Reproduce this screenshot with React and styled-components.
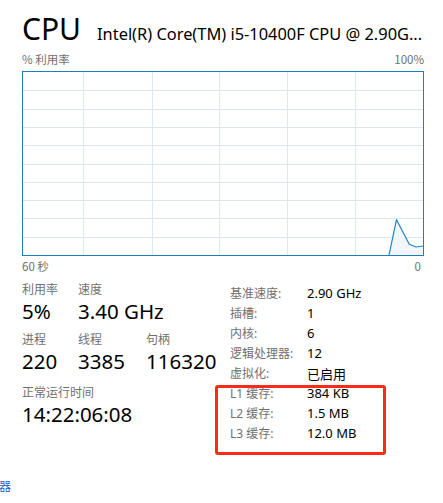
import React from "react";
import styled, { createGlobalStyle } from "styled-components";

const Global = createGlobalStyle`
  html, body { margin: 0; padding: 0; background: #fff; }
  body {
    font-family: "Segoe UI", "Noto Sans", "Noto Sans CJK SC", sans-serif;
    color: #000;
    overflow: hidden;
  }
`;

const Page = styled.div`
  position: relative;
  width: 443px;
  height: 503px;
  padding: 11px 19px 0 22px;
  box-sizing: border-box;
`;

const Header = styled.div`
  display: flex;
  align-items: baseline;
  gap: 16px;
  height: 40px;
  white-space: nowrap;
`;

const Title = styled.div`
  font-size: 30px;
  line-height: 36px;
  font-weight: 400;
`;

const Model = styled.div`
  font-size: 16.4px;
  white-space: nowrap;
  min-width: 0;
  flex: 1;
`;

const AxisRow = styled.div`
  display: flex;
  justify-content: space-between;
  font-size: 11.5px;
  line-height: 14px;
  color: #707070;
  font-family: "Segoe UI", "Noto Sans CJK SC", sans-serif;
  margin: ${(p) => p.$m || "0"};
`;

const Graph = styled.div`
  width: 402px;
  height: 185px;
  box-sizing: border-box;
  border: 1px solid #1d7dc1;
  margin-top: 5px;
  svg { display: block; }
`;

const Stats = styled.div`
  display: flex;
  margin-top: 11px;
`;

const LeftStats = styled.div`
  width: 208px;
  display: flex;
  flex-direction: column;
  gap: 6px;
  margin-top: -3px;
`;

const StatRow = styled.div`
  display: flex;
  margin-top: ${(p) => p.$mt || "0"};
`;

const Stat = styled.div`
  width: ${(p) => p.$w || "56px"};
  display: flex;
  flex-direction: column;
`;

const StatLabel = styled.div`
  font-size: 12px;
  line-height: 16px;
  color: #707070;
  font-family: "Noto Sans CJK SC", sans-serif;
`;

const StatValue = styled.div`
  font-size: 20.5px;
  line-height: 28px;
  white-space: nowrap;
`;

const Table = styled.div`
  display: grid;
  grid-template-columns: 77px auto;
  grid-auto-rows: 20px;
  align-items: center;
  margin-top: -1px;
`;

const TLabel = styled.div`
  font-size: 12px;
  color: #707070;
  font-family: "Segoe UI", "Noto Sans", "Noto Sans CJK SC", sans-serif;
  white-space: nowrap;
`;

const TValue = styled.div`
  font-size: 13px;
  white-space: nowrap;
  font-family: "Segoe UI", "Noto Sans", "Noto Sans CJK SC", sans-serif;
`;

const Highlight = styled.div`
  position: absolute;
  left: 215px;
  top: 385px;
  width: 171px;
  height: 70px;
  box-sizing: border-box;
  border: 3px solid #fd2a1c;
  border-radius: 3px;
  pointer-events: none;
`;

const Link = styled.div`
  position: absolute;
  left: -1px;
  top: 477px;
  font-size: 12px;
  line-height: 18px;
  color: #1a5fc8;
  font-family: "Noto Sans CJK SC", sans-serif;
  white-space: nowrap;
`;

const hLines = [1, 2, 3, 4, 5, 6, 7, 8, 9].map((k) => Math.round(k * 18.3) + 0.5);
const vLines = [60, 129, 196, 264, 332].map((x) => x + 0.5);

function Chart() {
  const pts = "366,183 373.5,147.7 386.3,172.3 393,175 400,174";
  return (
    <svg width="400" height="183" viewBox="0 0 400 183">
      {hLines.map((y) => (
        <line key={"h" + y} x1="0" x2="400" y1={y} y2={y} stroke="#dae7f1" strokeWidth="1" />
      ))}
      {vLines.map((x) => (
        <line key={"v" + x} x1={x} x2={x} y1="0" y2="183" stroke="#dae7f1" strokeWidth="1" />
      ))}
      <polygon points={pts + " 400,183"} fill="#f1f6fa" />
      <polyline points={pts} fill="none" stroke="#2184c4" strokeWidth="1.2" strokeLinejoin="round" />
    </svg>
  );
}

const rows = [
  ["基准速度:", "2.90 GHz"],
  ["插槽:", "1"],
  ["内核:", "6"],
  ["逻辑处理器:", "12"],
  ["虚拟化:", "已启用"],
  ["L1 缓存:", "384 KB"],
  ["L2 缓存:", "1.5 MB"],
  ["L3 缓存:", "12.0 MB"],
];

export default function App() {
  return (
    <>
      <Global />
      <Page>
        <Header>
          <Title>CPU</Title>
          <Model>Intel(R) Core(TM) i5-10400F CPU @ 2.90G...</Model>
        </Header>
        <AxisRow $m="1px 0 0 0">
          <span>% 利用率</span>
          <span>100%</span>
        </AxisRow>
        <Graph>
          <Chart />
        </Graph>
        <AxisRow $m="3px 3px 0 0">
          <span>60 秒</span>
          <span>0</span>
        </AxisRow>
        <Stats>
          <LeftStats>
            <StatRow>
              <Stat>
                <StatLabel>利用率</StatLabel>
                <StatValue>5%</StatValue>
              </Stat>
              <Stat $w="auto">
                <StatLabel>速度</StatLabel>
                <StatValue>3.40 GHz</StatValue>
              </Stat>
            </StatRow>
            <StatRow>
              <Stat>
                <StatLabel>进程</StatLabel>
                <StatValue>220</StatValue>
              </Stat>
              <Stat $w="68px">
                <StatLabel>线程</StatLabel>
                <StatValue>3385</StatValue>
              </Stat>
              <Stat $w="auto">
                <StatLabel>句柄</StatLabel>
                <StatValue>116320</StatValue>
              </Stat>
            </StatRow>
            <StatRow $mt="3px">
              <Stat $w="auto">
                <StatLabel>正常运行时间</StatLabel>
                <StatValue>14:22:06:08</StatValue>
              </Stat>
            </StatRow>
          </LeftStats>
          <Table>
            {rows.map(([l, v]) => (
              <React.Fragment key={l}>
                <TLabel>{l}</TLabel>
                <TValue>{v}</TValue>
              </React.Fragment>
            ))}
          </Table>
        </Stats>
        <Highlight />
        <Link>器</Link>
      </Page>
    </>
  );
}
